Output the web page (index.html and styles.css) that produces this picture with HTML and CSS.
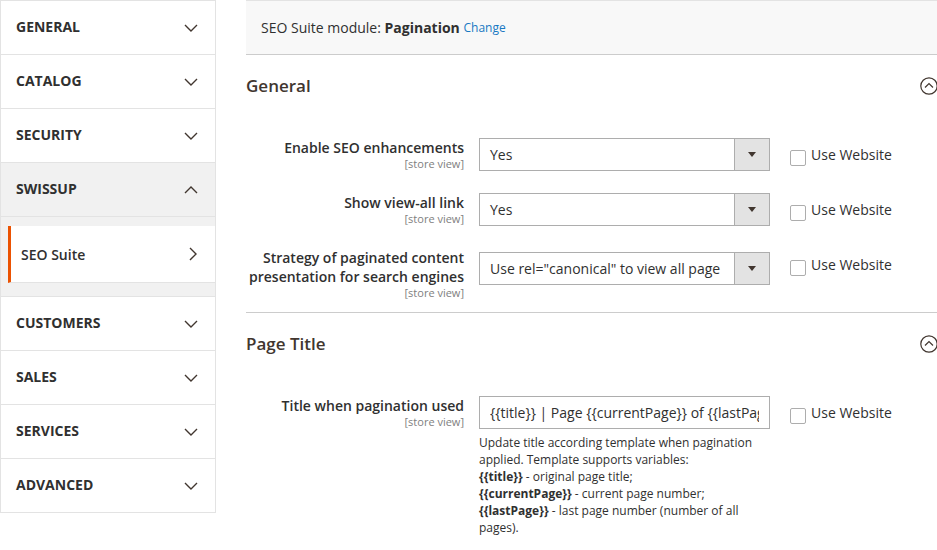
FILE: index.html
```html
<!DOCTYPE html>
<html lang="en">
<head>
<meta charset="utf-8">
<title>SEO Suite - Pagination</title>
<link rel="stylesheet" href="styles.css">
</head>
<body>
<div class="page">
  <aside class="nav">
    <div class="nav-item"><span>General</span><svg class="chev" width="14" height="8" viewBox="0 0 14 8"><polyline points="1,1 7,7 13,1"/></svg></div>
    <div class="nav-item"><span>Catalog</span><svg class="chev" width="14" height="8" viewBox="0 0 14 8"><polyline points="1,1 7,7 13,1"/></svg></div>
    <div class="nav-item"><span>Security</span><svg class="chev" width="14" height="8" viewBox="0 0 14 8"><polyline points="1,1 7,7 13,1"/></svg></div>
    <div class="nav-item nav-item--open"><span>Swissup</span><svg class="chev" width="14" height="8" viewBox="0 0 14 8"><polyline points="1,7 7,1 13,7"/></svg></div>
    <div class="nav-sub">
      <div class="nav-sub-item"><span>SEO Suite</span><svg class="chev" width="8" height="14" viewBox="0 0 8 14"><polyline points="1,1 7,7 1,13"/></svg></div>
    </div>
    <div class="nav-item"><span>Customers</span><svg class="chev" width="14" height="8" viewBox="0 0 14 8"><polyline points="1,1 7,7 13,1"/></svg></div>
    <div class="nav-item"><span>Sales</span><svg class="chev" width="14" height="8" viewBox="0 0 14 8"><polyline points="1,1 7,7 13,1"/></svg></div>
    <div class="nav-item"><span>Services</span><svg class="chev" width="14" height="8" viewBox="0 0 14 8"><polyline points="1,1 7,7 13,1"/></svg></div>
    <div class="nav-item"><span>Advanced</span><svg class="chev" width="14" height="8" viewBox="0 0 14 8"><polyline points="1,1 7,7 13,1"/></svg></div>
  </aside>

  <main class="main">
    <div class="scope-bar">SEO Suite module:&nbsp;<b>Pagination</b>&nbsp;<a class="change" href="#">Change</a></div>

    <section class="section">
      <div class="section-head">
        <h2>General</h2>
        <svg class="collapse" width="18" height="18" viewBox="0 0 18 18"><circle cx="9" cy="9" r="8.2"/><polyline points="5,10.5 9,6.5 13,10.5"/></svg>
      </div>
      <div class="fieldset">
        <div class="row">
          <div class="label">Enable SEO enhancements<span class="scope">[store view]</span></div>
          <div class="control"><div class="select"><span class="select-value">Yes</span><span class="select-btn"><i class="tri"></i></span></div></div>
          <div class="use-default"><span class="checkbox"></span><span class="use-text">Use Website</span></div>
        </div>
        <div class="row">
          <div class="label">Show view-all link<span class="scope">[store view]</span></div>
          <div class="control"><div class="select"><span class="select-value">Yes</span><span class="select-btn"><i class="tri"></i></span></div></div>
          <div class="use-default"><span class="checkbox"></span><span class="use-text">Use Website</span></div>
        </div>
        <div class="row row--last">
          <div class="label">Strategy of paginated content presentation for search engines<span class="scope">[store view]</span></div>
          <div class="control control--shift"><div class="select"><span class="select-value">Use rel="canonical" to view all page</span><span class="select-btn"><i class="tri"></i></span></div></div>
          <div class="use-default"><span class="checkbox"></span><span class="use-text">Use Website</span></div>
        </div>
      </div>
    </section>

    <section class="section">
      <div class="section-head">
        <h2>Page Title</h2>
        <svg class="collapse" width="18" height="18" viewBox="0 0 18 18"><circle cx="9" cy="9" r="8.2"/><polyline points="5,10.5 9,6.5 13,10.5"/></svg>
      </div>
      <div class="fieldset">
        <div class="row">
          <div class="label">Title when pagination used<span class="scope">[store view]</span></div>
          <div class="control">
            <div class="input"><span class="input-text">{{title}} | Page {{currentPage}} of {{lastPage}}</span></div>
            <p class="note">Update title according template when pagination applied. Template supports variables:<br><b>{{title}}</b> - original page title;<br><b>{{currentPage}}</b> - current page number;<br><b>{{lastPage}}</b> - last page number (number of all pages).</p>
          </div>
          <div class="use-default"><span class="checkbox"></span><span class="use-text">Use Website</span></div>
        </div>
      </div>
    </section>
  </main>
</div>
</body>
</html>
```

FILE: styles.css
```css
html, body {
  margin: 0;
  padding: 0;
  overflow: hidden;
  background: #fff;
}
body {
  font-family: "Open Sans", "Liberation Sans", sans-serif;
  color: #303030;
  font-size: 14px;
}
.page {
  display: flex;
  align-items: flex-start;
  width: 937px;
  height: 550px;
}

/* sidebar */
.nav {
  width: 216px;
  box-sizing: border-box;
  border: 1px solid #e3e3e3;
  border-bottom: 0;
  flex: none;
}
.nav-item {
  height: 53px;
  border-bottom: 1px solid #e3e3e3;
  display: flex;
  align-items: center;
  justify-content: space-between;
  padding: 0 17px 0 15px;
  font-weight: 700;
  text-transform: uppercase;
  font-size: 14px;
  line-height: 18px;
  color: #303030;
}
.nav-item span {
  margin-top: -1px;
}
.nav-item--open {
  background: #f1f1f1;
}
.chev {
  fill: none;
  stroke: #41362f;
  stroke-width: 1.4;
}
.nav-sub {
  background: #f1f1f1;
  padding: 9px 0 13px 7px;
  border-bottom: 1px solid #e3e3e3;
}
.nav-sub-item {
  height: 56px;
  background: #fff;
  border-left: 3px solid #eb5202;
  border-bottom: 1px solid #e3e3e3;
  display: flex;
  align-items: center;
  justify-content: space-between;
  padding: 0 18px 0 10px;
  font-weight: 600;
  font-size: 14px;
}

/* main */
.main {
  flex: 1;
  margin-left: 30px;
  min-width: 0;
  overflow: hidden;
}
.scope-bar {
  height: 53px;
  background: #f8f8f8;
  border-top: 1px solid #e3e3e3;
  border-bottom: 1px solid #cccccc;
  display: flex;
  align-items: center;
  padding-left: 15px;
  font-size: 14px;
  line-height: 18px;
  color: #303030;
}
.scope-bar b {
  font-weight: 700;
}
.change {
  color: #1979c3;
  text-decoration: none;
  font-size: 12px;
}
.section + .section {
  border-top: 1px solid #cccccc;
}
.section-head {
  display: flex;
  align-items: center;
  justify-content: space-between;
  padding-top: 19px;
  height: 24px;
}
.section-head h2 {
  margin: 0;
  font-size: 17px;
  line-height: 24px;
  font-weight: 600;
  color: #41362f;
}
.collapse {
  margin-right: -1px;
  fill: none;
  stroke: #41362f;
  stroke-width: 1.2;
}
.fieldset {
  padding-top: 40px;
  padding-bottom: 13px;
}
.row {
  display: flex;
  align-items: flex-start;
  margin-bottom: 22px;
}
.row--last {
  margin-bottom: 0;
}
.label {
  width: 233px;
  box-sizing: border-box;
  padding-right: 15px;
  text-align: right;
  font-weight: 600;
  font-size: 14px;
  line-height: 19px;
  color: #303030;
  flex: none;
}
.scope {
  display: block;
  font-size: 11px;
  line-height: 13px;
  font-weight: 400;
  color: #808080;
}
.control {
  width: 291px;
  flex: none;
}
.control--shift {
  margin-top: 4px;
}
.select, .input {
  height: 33px;
  box-sizing: border-box;
  border: 1px solid #adadad;
  background: #fff;
  display: flex;
  align-items: stretch;
  font-size: 14px;
  line-height: 31px;
  color: #303030;
}
.select-value {
  flex: 1;
  padding-left: 10px;
  white-space: nowrap;
  overflow: hidden;
}
.select-btn {
  width: 34px;
  background: #e3e3e3;
  border-left: 1px solid #adadad;
  display: flex;
  align-items: center;
  justify-content: center;
}
.tri {
  width: 0;
  height: 0;
  border-left: 4px solid transparent;
  border-right: 4px solid transparent;
  border-top: 5px solid #41362f;
}
.input {
  padding: 0 10px;
}
.input-text {
  flex: 1;
  white-space: nowrap;
  overflow: hidden;
}
.note {
  margin: 5px 0 0;
  font-size: 12px;
  line-height: 17px;
  color: #303030;
}
.note b {
  font-weight: 700;
}
.use-default {
  margin-left: 20px;
  display: flex;
  align-items: flex-start;
  gap: 5px;
}
.checkbox {
  width: 16px;
  height: 16px;
  box-sizing: border-box;
  border: 1px solid #adadad;
  border-radius: 2px;
  background: #fff;
  margin-top: 12px;
}
.use-text {
  font-size: 14px;
  line-height: 19px;
  padding-top: 7px;
  color: #303030;
  white-space: nowrap;
}
```
